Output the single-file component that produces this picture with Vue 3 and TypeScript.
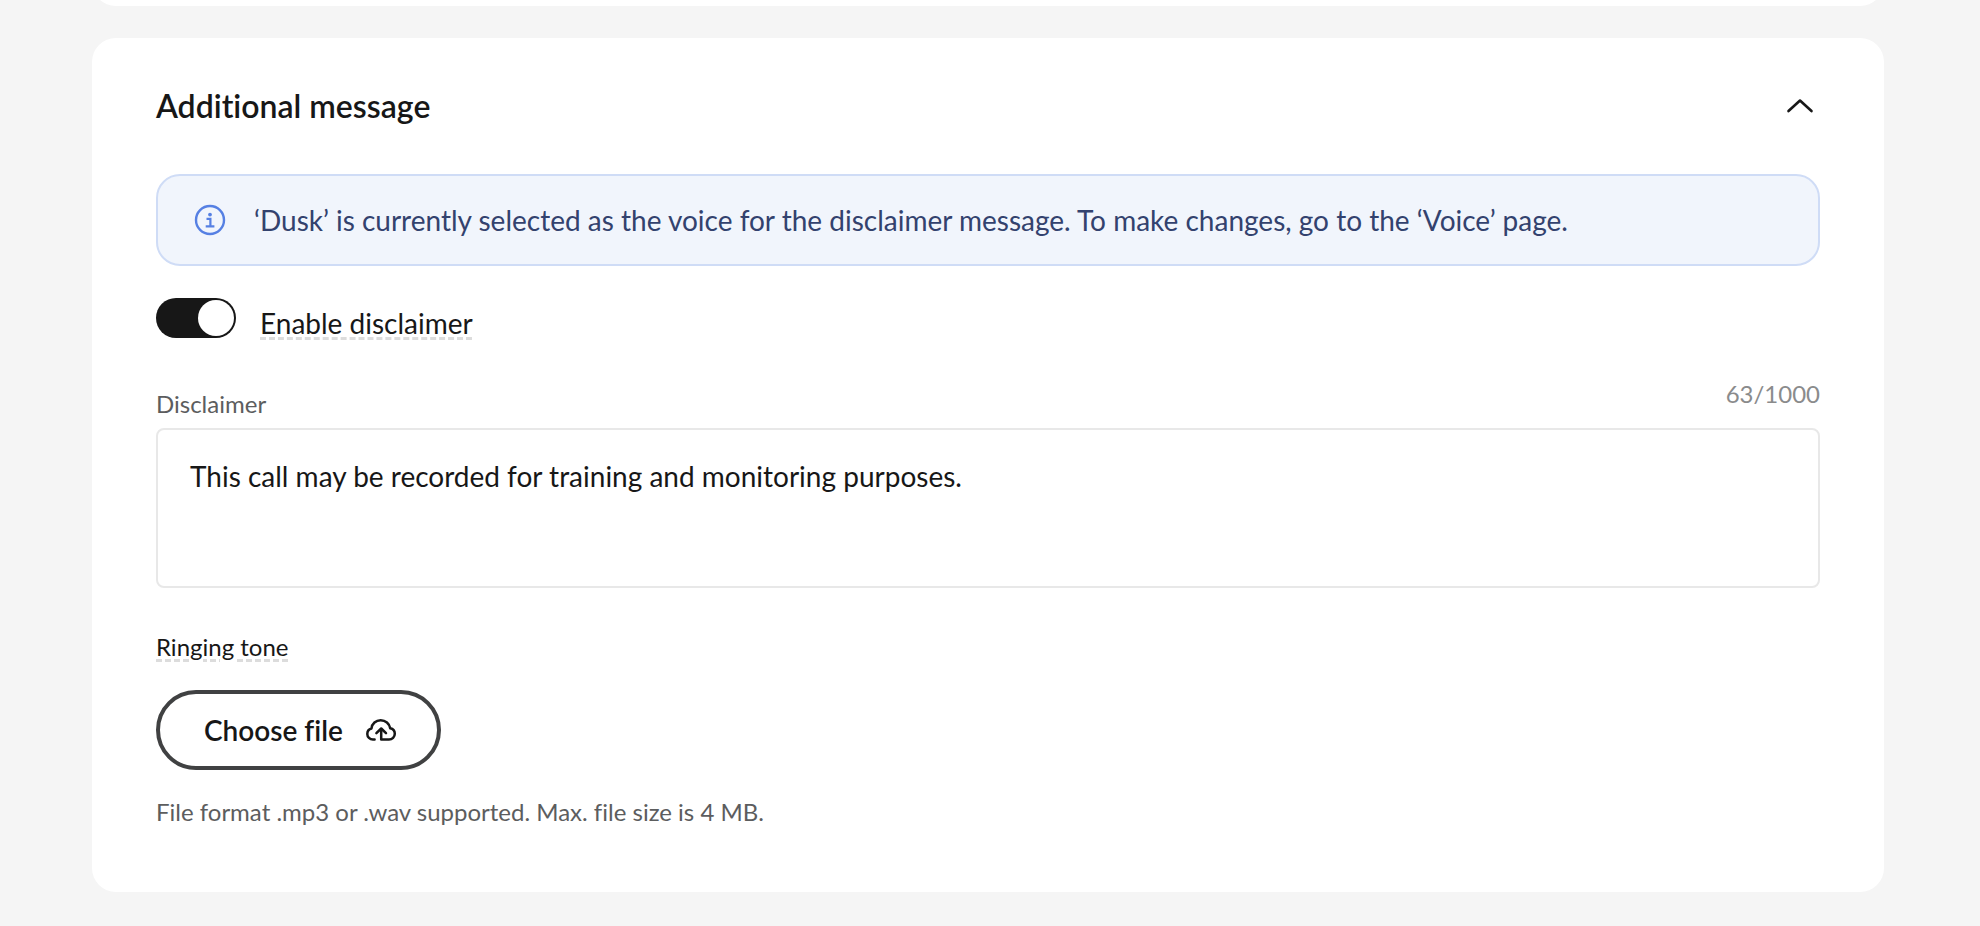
<script setup lang="ts">
import { computed, ref } from 'vue'

const maxLength = 1000
const expanded = ref(true)
const disclaimerEnabled = ref(true)
const disclaimer = ref('This call may be recorded for training and monitoring purposes.')
const savedLength = ref(63)
const counter = computed(() => `${savedLength.value}/${maxLength}`)

function updateLength() {
  savedLength.value = disclaimer.value.length
}
</script>

<template>
  <main class="page">
    <section class="card card-previous" aria-hidden="true"></section>
    <section class="card">
      <header class="card-header">
        <h2 class="title">Additional message</h2>
        <button
          class="collapse"
          type="button"
          aria-label="Toggle section"
          :aria-expanded="expanded"
          @click="expanded = !expanded"
        >
          <svg width="40" height="40" viewBox="0 0 40 40" fill="none" aria-hidden="true">
            <path d="M8.5 25 20 14.5 31.5 25" stroke="currentColor" stroke-width="2.6" stroke-linecap="round" stroke-linejoin="round" />
          </svg>
        </button>
      </header>

      <div v-if="expanded" class="content">
        <div class="notice" role="note">
          <svg class="notice-icon" width="32" height="32" viewBox="0 0 32 32" fill="none" aria-hidden="true">
            <circle cx="16" cy="16" r="14" stroke="currentColor" stroke-width="2.4" />
            <circle cx="16" cy="10.6" r="1.9" fill="currentColor" />
            <path d="M12.5 14.8H16.4V22.4M11.7 22.4H20.4" stroke="currentColor" stroke-width="2.2" />
          </svg>
          <p class="notice-text">‘Dusk’ is currently selected as the voice for the disclaimer message. To make changes, go to the ‘Voice’ page.</p>
        </div>

        <div class="switch-row">
          <input id="enable-disclaimer" v-model="disclaimerEnabled" class="switch" type="checkbox" role="switch" />
          <label class="switch-label hinted" for="enable-disclaimer">Enable disclaimer</label>
        </div>

        <div class="field-head">
          <label class="field-label" for="disclaimer">Disclaimer</label>
          <span class="counter">{{ counter }}</span>
        </div>
        <textarea
          id="disclaimer"
          v-model="disclaimer"
          class="textarea"
          :maxlength="maxLength"
          @input="updateLength"
        ></textarea>

        <div class="tone">
          <span id="tone-label" class="tone-label hinted">Ringing tone</span>
          <button class="choose" type="button" aria-describedby="tone-label tone-help">
            <span>Choose file</span>
            <svg width="32" height="32" viewBox="0 0 32 32" fill="none" aria-hidden="true">
              <path d="M9.6 25.5H8C4.8 25.5 2.3 23 2.3 19.9C2.3 17.2 4.1 15.1 6.5 14.5C6.9 9.7 10.9 6.2 15.7 6.2C20.5 6.2 24.4 9.6 25.2 14.2C28 14.8 29.8 17 29.8 19.7C29.8 23 27.2 25.5 24 25.5H16.2V15.5" stroke="currentColor" stroke-width="2.5" stroke-linecap="round" stroke-linejoin="round" />
              <path d="M11.4 19.2 16.2 14.5 21 19.2" stroke="currentColor" stroke-width="2.5" stroke-linecap="round" stroke-linejoin="round" />
            </svg>
          </button>
          <p id="tone-help" class="help">File format .mp3 or .wav supported. Max. file size is 4 MB.</p>
        </div>
      </div>
    </section>
  </main>
</template>

<style>
body {
  margin: 0;
  background: #f5f5f5;
}
</style>

<style scoped>
.page {
  display: flow-root;
  box-sizing: border-box;
  min-height: 100vh;
  padding: 0 96px 34px 92px;
  overflow: hidden;
  color: #171717;
  font-family: Lato, 'Open Sans', sans-serif;
  font-size: 28px;
  font-variant-ligatures: none;
  line-height: 40px;
}

.card {
  box-sizing: border-box;
  padding: 48px 64px 56px;
  border-radius: 24px;
  background: #fff;
}

.card-previous {
  height: 56px;
  margin: -50px 0 32px;
  padding: 0;
}

.card-header {
  display: flex;
  align-items: center;
  justify-content: space-between;
  margin-bottom: 48px;
}

.title {
  margin: 0;
  font-size: 32px;
  font-weight: 600;
  line-height: 40px;
}

.collapse {
  display: flex;
  padding: 0;
  border: 0;
  background: none;
  color: inherit;
  cursor: pointer;
}

.notice {
  display: flex;
  align-items: center;
  gap: 28px;
  padding: 24px 36px;
  border: 2px solid #cfdcf6;
  border-radius: 24px;
  background: #f1f5fc;
  color: #33426e;
}

.notice-icon {
  flex: none;
  color: #5680e3;
}

.notice-text {
  margin: 0;
}

.switch-row {
  display: flex;
  align-items: flex-start;
  gap: 24px;
  margin-top: 32px;
}

.switch {
  display: flex;
  flex: none;
  box-sizing: border-box;
  width: 80px;
  height: 40px;
  margin: 0;
  padding: 2px;
  border-radius: 20px;
  appearance: none;
  background: #8c8d8e;
  cursor: pointer;
}

.switch::before {
  width: 36px;
  height: 36px;
  border-radius: 50%;
  background: #fff;
  content: '';
}

.switch:checked {
  justify-content: flex-end;
  background: #171717;
}

.switch-label {
  padding-top: 5px;
}

.hinted {
  text-decoration: underline dashed #dcdcdc 3px;
  text-underline-offset: 3px;
}

.field-head {
  display: flex;
  align-items: flex-end;
  justify-content: space-between;
  margin-top: 35px;
  font-size: 24px;
  line-height: 32px;
}

.field-label {
  padding-bottom: 8px;
  color: #5c5d5e;
}

.counter {
  padding-bottom: 18px;
  color: #8a8b8c;
}

.textarea {
  display: block;
  box-sizing: border-box;
  width: 100%;
  height: 160px;
  padding: 26px 32px;
  border: 2px solid #e8e8e8;
  border-radius: 8px;
  outline: 0;
  background: #fff;
  color: inherit;
  font: inherit;
  font-variant-ligatures: none;
  resize: none;
}

.tone {
  display: flex;
  flex-direction: column;
  align-items: flex-start;
  margin-top: 43px;
  font-size: 24px;
  line-height: 32px;
}

.choose {
  display: flex;
  align-items: center;
  gap: 22px;
  margin: 27px 0 26px;
  padding: 16px 40px 16px 44px;
  border: 4px solid #404142;
  border-radius: 40px;
  background: #fff;
  color: inherit;
  font: inherit;
  font-size: 28px;
  font-weight: 600;
  line-height: 40px;
  cursor: pointer;
}

.help {
  margin: 0;
  padding-bottom: 8px;
  color: #5c5d5e;
}
</style>
